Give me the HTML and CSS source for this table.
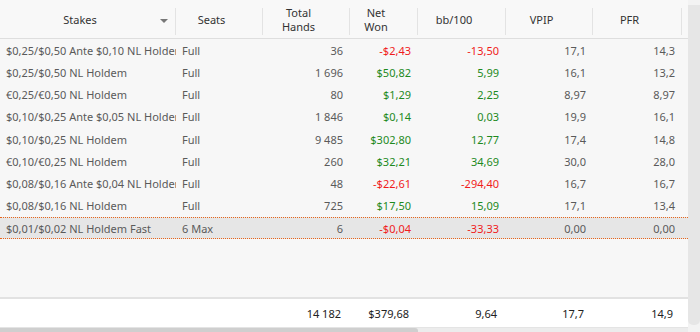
FILE: index.html
```html
<!DOCTYPE html>
<html>
<head>
<meta charset="utf-8">
<link rel="stylesheet" href="styles.css">
</head>
<body>
<div class="app">
  <div class="grid">
    <div class="head">
      <div class="hc sorted">Stakes<span class="arrow"></span></div>
      <div class="hc">Seats</div>
      <div class="hc">Total<br>Hands</div>
      <div class="hc">Net<br>Won</div>
      <div class="hc">bb/100</div>
      <div class="hc">VPIP</div>
      <div class="hc">PFR</div>
      <div class="hfill"></div>
    </div>
    <div class="body">
      <div class="row"><div class="c t">$0,25/$0,50 Ante $0,10 NL Holdem</div><div class="c t">Full</div><div class="c n">36</div><div class="c n neg">-$2,43</div><div class="c n neg">-13,50</div><div class="c n">17,1</div><div class="c n">14,3</div></div>
      <div class="row"><div class="c t">$0,25/$0,50 NL Holdem</div><div class="c t">Full</div><div class="c n">1 696</div><div class="c n pos">$50,82</div><div class="c n pos">5,99</div><div class="c n">16,1</div><div class="c n">13,2</div></div>
      <div class="row"><div class="c t">€0,25/€0,50 NL Holdem</div><div class="c t">Full</div><div class="c n">80</div><div class="c n pos">$1,29</div><div class="c n pos">2,25</div><div class="c n">8,97</div><div class="c n">8,97</div></div>
      <div class="row"><div class="c t">$0,10/$0,25 Ante $0,05 NL Holdem</div><div class="c t">Full</div><div class="c n">1 846</div><div class="c n pos">$0,14</div><div class="c n pos">0,03</div><div class="c n">19,9</div><div class="c n">16,1</div></div>
      <div class="row"><div class="c t">$0,10/$0,25 NL Holdem</div><div class="c t">Full</div><div class="c n">9 485</div><div class="c n pos">$302,80</div><div class="c n pos">12,77</div><div class="c n">17,4</div><div class="c n">14,8</div></div>
      <div class="row"><div class="c t">€0,10/€0,25 NL Holdem</div><div class="c t">Full</div><div class="c n">260</div><div class="c n pos">$32,21</div><div class="c n pos">34,69</div><div class="c n">30,0</div><div class="c n">28,0</div></div>
      <div class="row"><div class="c t">$0,08/$0,16 Ante $0,04 NL Holdem</div><div class="c t">Full</div><div class="c n">48</div><div class="c n neg">-$22,61</div><div class="c n neg">-294,40</div><div class="c n">16,7</div><div class="c n">16,7</div></div>
      <div class="row"><div class="c t">$0,08/$0,16 NL Holdem</div><div class="c t">Full</div><div class="c n">725</div><div class="c n pos">$17,50</div><div class="c n pos">15,09</div><div class="c n">17,1</div><div class="c n">13,4</div></div>
      <div class="row sel"><div class="c t">$0,01/$0,02 NL Holdem Fast</div><div class="c t">6 Max</div><div class="c n">6</div><div class="c n neg">-$0,04</div><div class="c n neg">-33,33</div><div class="c n">0,00</div><div class="c n">0,00</div></div>
    </div>
    <div class="foot">
      <div class="f"></div>
      <div class="f"></div>
      <div class="f">14 182</div>
      <div class="f">$379,68</div>
      <div class="f">9,64</div>
      <div class="f">17,7</div>
      <div class="f">14,9</div>
    </div>
    <div class="hscroll"><div class="hthumb"></div></div>
  </div>
  <div class="vscroll"><div class="vthumb"></div></div>
</div>
</body>
</html>
```
FILE: styles.css
```css
html, body {
  margin: 0;
  padding: 0;
}
body {
  width: 700px;
  height: 332px;
  overflow: hidden;
  background: #f3f3f3;
  font-family: "Segoe UI", "Noto Sans", "Open Sans", sans-serif;
  font-size: 11px;
}
.app {
  display: flex;
  width: 700px;
  height: 332px;
}
.grid {
  width: 688px;
  display: flex;
  flex-direction: column;
}
.head {
  display: grid;
  grid-template-columns: 176px 87px 87px 68px 88px 87px 89px 1fr;
  height: 38px;
  background: #f8f8f8;
  border-bottom: 1px solid #dedede;
}
.hc {
  position: relative;
  display: flex;
  align-items: center;
  justify-content: center;
  text-align: center;
  padding-right: 16px;
  padding-top: 1px;
  line-height: 14px;
  color: #333;
}
.hc::after {
  content: "";
  position: absolute;
  right: 0;
  top: 8px;
  bottom: 3px;
  width: 1px;
  background: #e3e3e3;
}
.arrow {
  position: absolute;
  left: 160px;
  top: 19px;
  width: 0;
  height: 0;
  border-left: 4px solid transparent;
  border-right: 4px solid transparent;
  border-top: 4px solid #777;
}
.body {
  flex: 1;
  background: #f7f7f7;
}
.row {
  display: grid;
  grid-template-columns: 176px 87px 87px 68px 88px 87px 89px 1fr;
  height: 22.25px;
  align-items: center;
  color: #5a5a5a;
  box-sizing: border-box;
}
.row.sel {
  background: #e6e6e6;
  border-top: 1px dotted #e8661c;
  border-bottom: 1px dotted #e8661c;
}
.c {
  white-space: nowrap;
  overflow: hidden;
}
.c.t {
  padding-left: 6px;
}
.c.n {
  text-align: right;
  padding-right: 7px;
}
.neg { color: #f01c1c; }
.pos { color: #1e8a1e; }
.foot {
  display: grid;
  grid-template-columns: 176px 87px 87px 68px 88px 87px 89px 1fr;
  height: 28px;
  align-items: center;
  background: #ffffff;
  border-top: 2px solid #e2e2e2;
  color: #222;
}
.f {
  text-align: right;
  padding-right: 9px;
}
.hscroll {
  height: 4px;
  background: #ececec;
  border-top: 1px solid #e4e4e4;
}
.hthumb {
  width: 418px;
  height: 4px;
  background: #cfcfcf;
  border-radius: 0 3px 0 0;
}
.vscroll {
  width: 12px;
  padding-top: 5px;
  padding-bottom: 7px;
  background: #f3f3f3;
  box-sizing: border-box;
}
.vthumb {
  height: 100%;
  background: #e6e6e6;
  border-radius: 0 0 5px 5px;
}
```
